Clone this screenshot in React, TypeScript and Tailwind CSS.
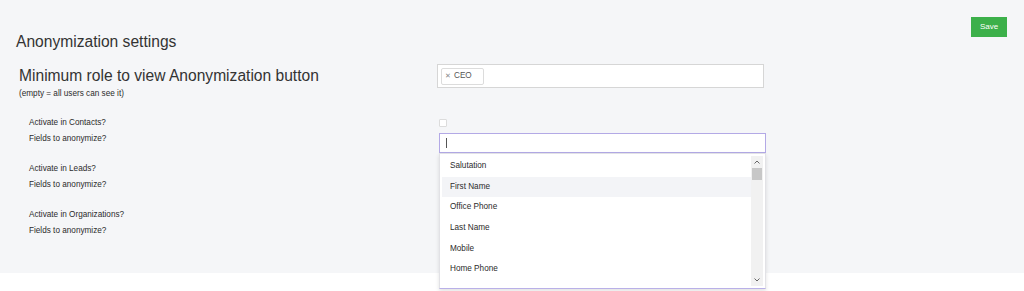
import { useState } from 'react';

const fields = ['Salutation', 'First Name', 'Office Phone', 'Last Name', 'Mobile', 'Home Phone'];

function FieldDropdown() {
  return (
    <div className="absolute left-0 top-full z-10 flex h-[136px] w-[327px] border border-[#e2e2e6] border-b-[#b9b0e8] bg-white px-[2px] pt-[2px] shadow-[0_2px_4px_rgba(0,0,0,0.12)]">
      <ul className="flex-1 overflow-hidden">
        {fields.map((f, i) => (
          <li
            key={f}
            className={`h-[20.7px] pl-[8px] text-[8.2px] leading-[20.7px] text-[#2b2b2b] ${i === 1 ? 'bg-[#f3f4f7]' : ''}`}
          >
            {f}
          </li>
        ))}
      </ul>
      <div className="mb-[2px] flex w-[12px] flex-col bg-[#f1f1f1]">
        <div className="flex h-[12px] items-center justify-center text-[#666]">
          <svg width="6" height="4" viewBox="0 0 6 4"><path d="M0.5 3.5L3 1L5.5 3.5" fill="none" stroke="currentColor" strokeWidth="1" /></svg>
        </div>
        <div className="mx-[1px] h-[12px] bg-[#c7c7c7]" />
        <div className="flex-1" />
        <div className="flex h-[12px] items-center justify-center text-[#666]">
          <svg width="6" height="4" viewBox="0 0 6 4"><path d="M0.5 0.5L3 3L5.5 0.5" fill="none" stroke="currentColor" strokeWidth="1" /></svg>
        </div>
      </div>
    </div>
  );
}

function Section({ name, open }: { name: string; open?: boolean }) {
  const [checked, setChecked] = useState(false);
  return (
    <div className="grid grid-cols-[437px_329px]">
      <div className="h-[17px] pl-[29px] text-[8.2px] leading-[17px] text-[#2b2b2b]">Activate in {name}?</div>
      <div className="flex items-center pl-[2px]">
        <input
          type="checkbox"
          checked={checked}
          onChange={() => setChecked(!checked)}
          className="h-[8px] w-[8px] appearance-none rounded-[1px] border border-[#dcdcdc] bg-white"
        />
      </div>
      <div className="h-4 pl-[29px] text-[8.2px] leading-4 text-[#2b2b2b]">Fields to anonymize?</div>
      <div className="relative ml-[2px] mt-[2px] h-[20px] w-[327px]">
        {open && (
          <>
            <div className="flex h-full items-center border border-[#b3a9e6] bg-white pl-[6px]">
              <span className="h-[10px] w-px bg-[#555]" />
            </div>
            <FieldDropdown />
          </>
        )}
      </div>
    </div>
  );
}

export default function App() {
  return (
    <div className="min-h-[291px] bg-white font-['Liberation_Sans',Arial,sans-serif]">
      <div className="h-[273px] bg-[#f5f6f8]">
        <div className="flex justify-end pr-[17px] pt-[17px]">
          <button className="h-5 w-9 bg-[#3cb04a] text-[8px] text-white">Save</button>
        </div>
        <h1 className="-mt-[5px] pl-4 text-[15.6px] leading-5 text-[#333]">Anonymization settings</h1>
        <div className="mt-[12px] grid grid-cols-[437px_327px]">
          <div className="pl-[19px] pt-[2px]">
            <div className="text-[15.6px] leading-5 text-[#333]">Minimum role to view Anonymization button</div>
            <div className="mt-[2px] text-[8.2px] leading-3 text-[#2b2b2b]">(empty = all users can see it)</div>
          </div>
          <div className="flex h-6 items-center border border-[#d6d6d6] bg-white pl-[3px]">
            <span className="flex h-[17px] items-center gap-[3px] rounded-[2px] border border-[#dcdcdc] bg-white px-[3px] pr-[11px] text-[8.2px] text-[#555]">
              <span className="text-[7px] text-[#888]">✕</span>CEO
            </span>
          </div>
        </div>
        <div className="mt-[14px] flex flex-col gap-[7px]">
          <Section name="Contacts" open />
          <Section name="Leads" />
          <Section name="Organizations" />
        </div>
      </div>
    </div>
  );
}
